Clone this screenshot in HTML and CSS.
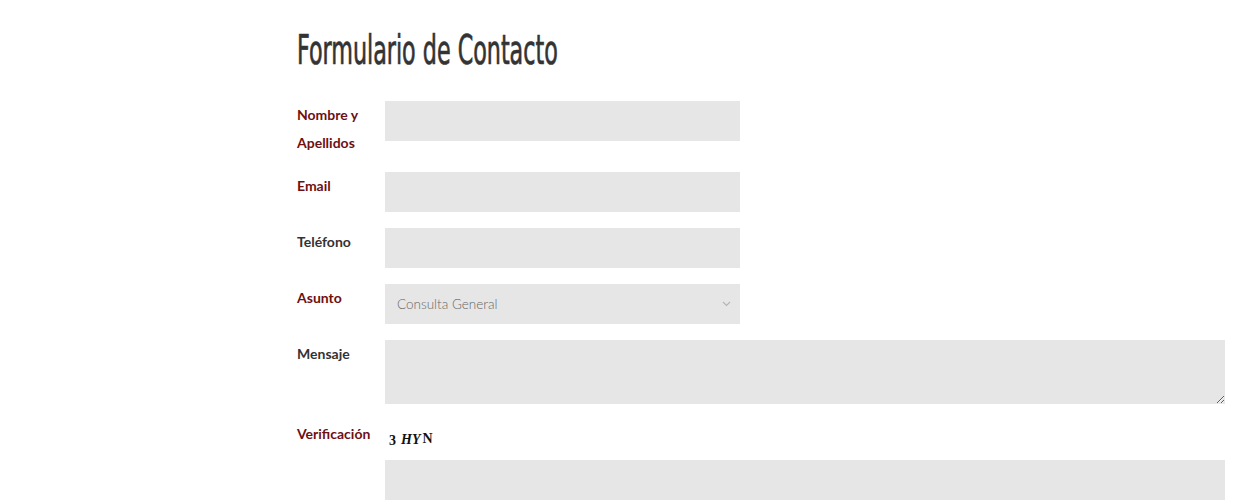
FILE: index.html
```html
<!DOCTYPE html>
<html lang="es">
<head>
<meta charset="utf-8">
<title>Formulario de Contacto</title>
<link rel="stylesheet" href="styles.css">
</head>
<body>
<main class="page">
  <h1 class="title">Formulario de Contacto</h1>
  <form class="form">
    <div class="row">
      <label class="label req">Nombre y Apellidos</label>
      <input class="field short" type="text">
    </div>
    <div class="row">
      <label class="label req">Email</label>
      <input class="field short" type="text">
    </div>
    <div class="row">
      <label class="label">Teléfono</label>
      <input class="field short" type="text">
    </div>
    <div class="row">
      <label class="label req">Asunto</label>
      <div class="select short">
        <span>Consulta General</span>
        <svg class="chev" width="9" height="6" viewBox="0 0 9 6"><path d="M1 1 L4.5 4.5 L8 1" fill="none" stroke="#b5b5b5" stroke-width="1.2"/></svg>
      </div>
    </div>
    <div class="row">
      <label class="label">Mensaje</label>
      <textarea class="field area"></textarea>
    </div>
    <div class="row">
      <label class="label req">Verificación</label>
      <div class="verify">
        <div class="captcha"><span class="c1">3</span><span class="c2">H</span><span class="c3">Y</span><span class="c4">N</span></div>
        <input class="field long" type="text">
      </div>
    </div>
  </form>
</main>
</body>
</html>
```
FILE: styles.css
```css
html, body {
  margin: 0;
  padding: 0;
  background: #ffffff;
}
.page {
  padding: 26px 0 0 297px;
  width: 928px;
}
.title {
  margin: 0 0 27px 0;
  font-family: "Liberation Sans Narrow", "DejaVu Sans Condensed", sans-serif;
  font-weight: normal;
  font-size: 40px;
  line-height: 48px;
  color: #333333;
  -webkit-text-stroke: 0.7px #333333;
  transform: scaleX(0.618);
  transform-origin: left center;
  white-space: nowrap;
}
.form {
  display: flex;
  flex-direction: column;
  gap: 16px;
}
.row {
  display: flex;
  align-items: flex-start;
}
.label {
  width: 88px;
  flex: none;
  font-family: "Lato", "Open Sans", sans-serif;
  font-weight: bold;
  font-size: 14px;
  line-height: 27.5px;
  color: #333333;
}
.label.req {
  color: #6e0f12;
}
.field {
  display: block;
  box-sizing: border-box;
  border: none;
  background: #e6e6e6;
  height: 40px;
  margin: 0;
  padding: 0 12px;
  outline: none;
  font-family: "Lato", sans-serif;
}
.short {
  width: 355px;
}
.area {
  width: 840px;
  height: 64px;
  resize: vertical;
}
.select {
  box-sizing: border-box;
  height: 40px;
  background: #e6e6e6;
  display: flex;
  align-items: center;
  justify-content: space-between;
  padding: 0 9px 0 12px;
  font-family: "Lato", "Open Sans", sans-serif;
  font-weight: 300;
  font-size: 13.5px;
  color: #666666;
}
.chev {
  display: block;
}
.verify {
  display: flex;
  flex-direction: column;
}
.captcha {
  height: 40px;
  display: flex;
  align-items: center;
  padding-left: 4px;
  font-family: "Liberation Serif", serif;
  font-weight: bold;
  color: #111111;
}
.captcha span {
  display: inline-block;
}
.c1 { font-size: 14px; margin-right: 5px; position: relative; top: 1px; }
.c2 { font-size: 14px; font-style: italic; }
.c3 { font-size: 14px; font-style: italic; margin-right: 2px; }
.c4 { font-size: 14px; position: relative; top: -1px; }
.long {
  width: 840px;
}
```
